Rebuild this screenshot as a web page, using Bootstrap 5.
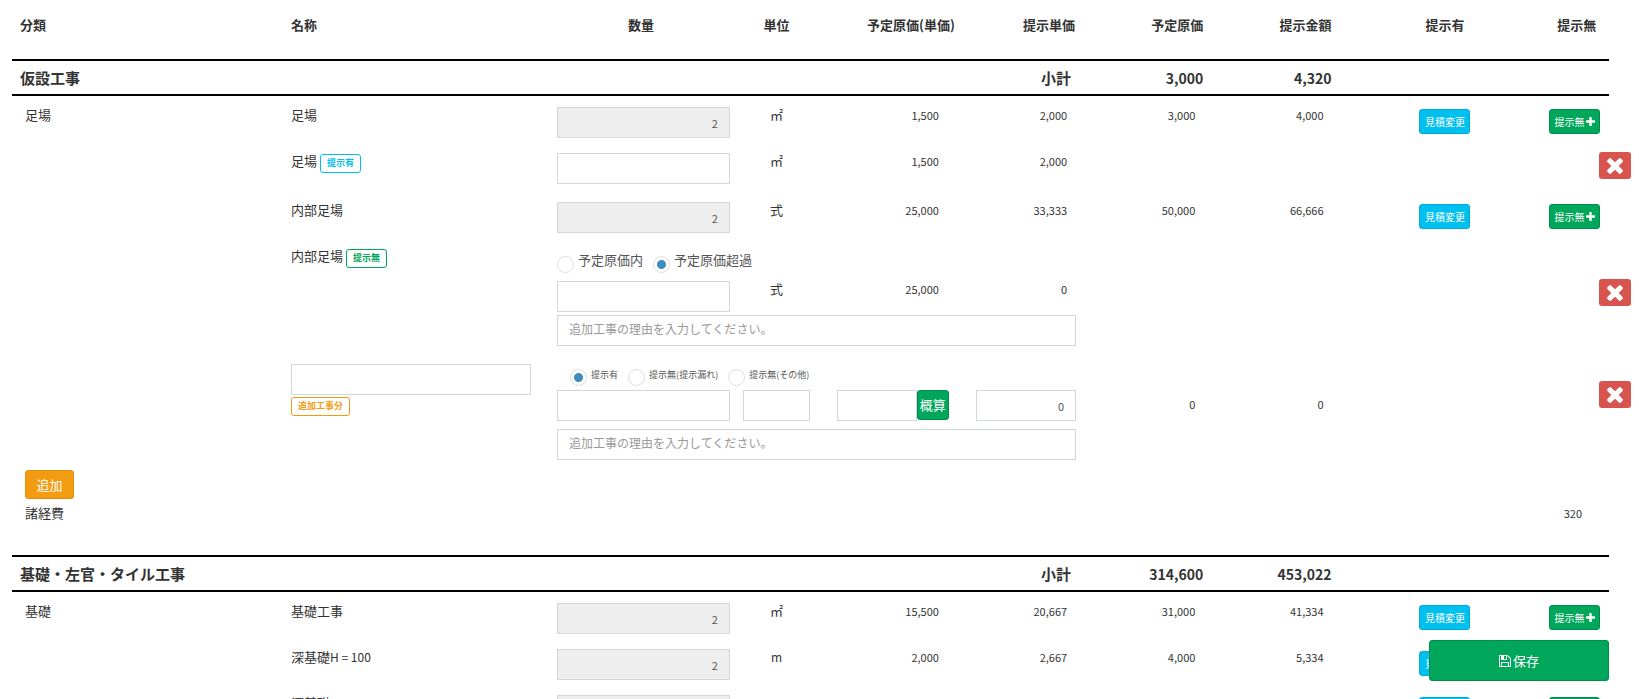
<!DOCTYPE html>
<html lang="ja">
<head>
<meta charset="utf-8">
<meta name="viewport" content="width=device-width, initial-scale=1">
<title>見積明細</title>
<link href="https://cdn.jsdelivr.net/npm/bootstrap@5.3.0/dist/css/bootstrap.min.css" rel="stylesheet">
<style>
body{font-family:"Noto Sans CJK JP","Noto Sans",sans-serif;font-size:13px;line-height:18px;color:#333}
.sheet{padding:0 30px 0 12px}
.estimate{width:100%;table-layout:fixed;border-collapse:separate;border-spacing:0}
.estimate th,.estimate td{padding:10px 13px 0;vertical-align:top;white-space:nowrap}
/* column widths */
.c-cat,.c-name{width:16.66%}.c-qty,.c-with{width:12.45%}.c-unit{width:4.2%}
.c-uprice{width:9.45%}.c-num{width:8.03%}
/* header and section rows */
.estimate thead th{height:59px;padding-top:16px}
.estimate .edge{padding-left:8px}
.estimate th.amt{padding-right:14px;text-align:right}
.estimate th.amt-wide{padding-right:6px;text-align:right}
.estimate th.sum-label{padding-right:18px;text-align:right}
.estimate th.qty-head{padding-right:18px;text-align:center}
.estimate .section-row th{height:37px;padding-top:0;vertical-align:middle;border-top:2px solid #000;border-bottom:2px solid #000;font-size:15px}
.estimate .section-row .figure-sum{font-size:14px}
/* row heights */
.r-item{height:46px}.r-option{height:49px}.r-pick{height:43px}.r-line{height:34px}
.r-reason{height:39px}.r-add-pick{height:36px}.r-add-line{height:39px}.r-last{height:42px}.r-cost{height:51px}
.estimate .flush td{padding-top:0}
.estimate td.unit{padding-left:0;padding-right:0;text-align:center}
.estimate td.num{padding-right:22px;text-align:right;font-size:11px}
.estimate .mid td.num{padding-top:6px}
.estimate td.act{padding-top:13px;text-align:center}
.estimate td.act-end{padding:13px 0 0 5px}
.estimate td.low{padding-top:42px}
.estimate td.mid-low{padding-top:28px}
.estimate td.price-entry{padding-left:27px;padding-right:12px}
.estimate td.amount-entry{padding-left:15px}
.estimate td.cost{padding-right:27px;text-align:right;font-size:11px}
.latin{font-size:12px}
/* controls */
.form-control.field{height:31px;min-height:31px;margin-top:1px;padding:0 11px;border-color:#d2d6de;border-radius:0;font-size:11px;color:#555}
.form-control.field:disabled{background:#eee;opacity:1}
.form-control.reason{font-size:12px;padding-bottom:4px}
.form-control.reason::placeholder{color:#999}
.btn.act-btn{border-radius:3px;color:#fff;padding:0;font-size:13px;line-height:18px}
.btn.mini{width:51px;height:25px;font-size:10px;display:inline-flex;align-items:center;justify-content:center;gap:2px}
.bg-sky{background:#00c0ef;border-color:#00acd6}
.bg-leaf{background:#00a65a;border-color:#008d4c}
.bg-amber{background:#f39c12;border-color:#e08e0b}
.bg-sky:hover{background:#00acd6}.bg-leaf:hover{background:#008d4c}.bg-amber:hover{background:#e08e0b}
.btn.add{width:49px;height:29px}
.btn.rough{width:32px;height:30px;margin-top:1px;flex:none}
.btn.del{width:32px;height:27px;background:#d9534f;border:0;float:right;margin-right:-22px;display:flex;align-items:center;justify-content:center}
.estimate td.del-cell{padding-right:0}
.btn.save{right:30px;bottom:18px;width:180px;height:41px;gap:2px}
.tag-line{display:flex;gap:3px}
.tag-line .tag{margin-top:2px}
.tag{display:inline-block;height:19px;line-height:16px;padding:0 6px;border:1px solid;border-radius:3px;font-size:9px;font-weight:700}
.tag-sky{color:#00c0ef}.tag-leaf{color:#00a65a}.tag-amber{color:#f39c12}
.pick{display:flex;align-items:flex-start;gap:4px;color:#555}
.pick input{appearance:none;width:17px;height:17px;margin:5px 0 0;border:1px solid #ddd;border-radius:50%;background:#fff}
.pick input:checked{background:radial-gradient(circle,#3c8dbc 4px,#fff 5px)}
.picks{padding-top:4px;gap:10px}
.picks-small{padding:5px 0 0 13px;gap:10px}
.picks-small .pick{font-size:9px;line-height:14px}
.picks-small input{margin-top:1px}
svg{fill:currentColor;display:block}
</style>
</head>
<body>
<svg class="d-none" aria-hidden="true">
  <symbol id="i-times" viewBox="302 366 1188 1188"><path d="M1490 1322q0 40-28 68l-136 136q-28 28-68 28t-68-28l-294-294-294 294q-28 28-68 28t-68-28l-136-136q-28-28-28-68t28-68l294-294-294-294q-28-28-28-68t28-68l136-136q28-28 68-28t68 28l294 294 294-294q28-28 68-28t68 28l136 136q28 28 28 68t-28 68l-294 294 294 294q28 28 28 68z"/></symbol>
  <symbol id="i-plus" viewBox="192 128 1408 1408"><path d="M1600 736v192q0 40-28 68t-68 28h-416v416q0 40-28 68t-68 28h-192q-40 0-68-28t-28-68v-416h-416q-40 0-68-28t-28-68v-192q0-40 28-68t68-28h416v-416q0-40 28-68t68-28h192q40 0 68 28t28 68v416h416q40 0 68 28t28 68z"/></symbol>
  <symbol id="i-save" viewBox="128 128 1536 1536"><path d="M512 1536h768v-384h-768v384zm896 0h128v-896q0-14-10-38.5t-20-34.5l-281-281q-10-10-34-20t-39-10v416q0 40-28 68t-68 28h-576q-40 0-68-28t-28-68v-416h-128v1280h128v-416q0-40 28-68t68-28h832q40 0 68 28t28 68v416zm-384-928v-320q0-13-9.5-22.5t-22.5-9.5h-192q-13 0-22.5 9.5t-9.5 22.5v320q0 13 9.5 22.5t22.5 9.5h192q13 0 22.5-9.5t9.5-22.5zm640 32v928q0 40-28 68t-68 28h-1344q-40 0-68-28t-28-68v-1344q0-40 28-68t68-28h928q40 0 88 20t76 48l280 280q28 28 48 76t20 88z"/></symbol>
</svg>
<main class="sheet vh-100 overflow-hidden">
<table class="estimate">
  <colgroup><col class="c-cat"><col class="c-name"><col class="c-qty"><col class="c-unit"><col class="c-uprice"><col class="c-num"><col class="c-num"><col class="c-num"><col class="c-with"><col></colgroup>
  <thead>
    <tr><th class="edge">分類</th><th>名称</th><th class="qty-head">数量</th><th class="text-center px-0">単位</th><th class="amt-wide">予定原価(単価)</th><th class="amt">提示単価</th><th class="amt">予定原価</th><th class="amt">提示金額</th><th class="text-center">提示有</th><th class="text-center px-0">提示無</th></tr>
  </thead>
  <tbody>
    <tr class="section-row"><th class="edge" colspan="5">仮設工事</th><th class="sum-label">小計</th><th class="amt figure-sum">3,000</th><th class="amt figure-sum">4,320</th><th colspan="2"></th></tr>
    <tr class="r-item"><td>足場</td><td>足場</td><td><input class="form-control field text-end" aria-label="足場 数量" value="2" disabled></td><td class="unit">㎡</td><td class="num">1,500</td><td class="num">2,000</td><td class="num">3,000</td><td class="num">4,000</td><td class="act"><button type="button" class="btn act-btn mini bg-sky">見積変更</button></td><td class="act-end"><button type="button" class="btn act-btn mini bg-leaf">提示無<svg width="9" height="9"><use href="#i-plus"/></svg></button></td></tr>
    <tr class="r-option"><td></td><td><div class="tag-line">足場<span class="tag tag-sky">提示有</span></div></td><td><input class="form-control field text-end" aria-label="足場 提示有 数量"></td><td class="unit">㎡</td><td class="num">1,500</td><td class="num">2,000</td><td></td><td></td><td></td><td class="del-cell"><button type="button" class="btn act-btn del" aria-label="削除"><svg width="16" height="16"><use href="#i-times"/></svg></button></td></tr>
    <tr class="r-item"><td></td><td>内部足場</td><td><input class="form-control field text-end" aria-label="内部足場 数量" value="2" disabled></td><td class="unit">式</td><td class="num">25,000</td><td class="num">33,333</td><td class="num">50,000</td><td class="num">66,666</td><td class="act"><button type="button" class="btn act-btn mini bg-sky">見積変更</button></td><td class="act-end"><button type="button" class="btn act-btn mini bg-leaf">提示無<svg width="9" height="9"><use href="#i-plus"/></svg></button></td></tr>
    <tr class="r-pick"><td></td><td rowspan="3"><div class="tag-line">内部足場<span class="tag tag-leaf">提示無</span></div></td>
      <td colspan="7"><div class="d-flex picks"><label class="pick"><input type="radio" name="over">予定原価内</label><label class="pick"><input type="radio" name="over" checked>予定原価超過</label></div></td>
      <td class="del-cell low" rowspan="3"><button type="button" class="btn act-btn del" aria-label="削除"><svg width="16" height="16"><use href="#i-times"/></svg></button></td></tr>
    <tr class="r-line flush"><td></td><td><input class="form-control field text-end" aria-label="内部足場 提示無 数量"></td><td class="unit">式</td><td class="num">25,000</td><td class="num">0</td><td colspan="3"></td></tr>
    <tr class="r-reason flush"><td></td><td colspan="4"><input class="form-control field reason" aria-label="追加工事の理由" placeholder="追加工事の理由を入力してください。"></td><td colspan="3"></td></tr>
    <tr class="r-add-pick"><td></td><td rowspan="3"><input class="form-control field" aria-label="追加工事名"><span class="tag tag-amber">追加工事分</span></td>
      <td colspan="7"><div class="d-flex picks-small"><label class="pick"><input type="radio" name="kind" checked>提示有</label><label class="pick"><input type="radio" name="kind">提示無(提示漏れ)</label><label class="pick"><input type="radio" name="kind">提示無(その他)</label></div></td>
      <td class="del-cell mid-low" rowspan="3"><button type="button" class="btn act-btn del" aria-label="削除"><svg width="16" height="16"><use href="#i-times"/></svg></button></td></tr>
    <tr class="r-add-line flush mid"><td></td><td><input class="form-control field text-end" aria-label="追加工事 数量"></td><td class="unit"><input class="form-control field" aria-label="追加工事 単位"></td><td class="price-entry"><div class="d-flex"><input class="form-control field text-end" aria-label="追加工事 予定原価(単価)"><button type="button" class="btn act-btn rough bg-leaf">概算</button></div></td><td class="amount-entry"><input class="form-control field text-end" aria-label="追加工事 提示単価" value="0"></td><td class="num">0</td><td class="num">0</td><td></td></tr>
    <tr class="r-last flush"><td></td><td colspan="4"><input class="form-control field reason" aria-label="追加工事の理由" placeholder="追加工事の理由を入力してください。"></td><td colspan="3"></td></tr>
    <tr class="r-line flush"><td colspan="10"><button type="button" class="btn act-btn add bg-amber">追加</button></td></tr>
    <tr class="r-cost flush"><td colspan="9">諸経費</td><td class="cost">320</td></tr>
  </tbody>
  <tbody>
    <tr class="section-row"><th class="edge" colspan="5">基礎・左官・タイル工事</th><th class="sum-label">小計</th><th class="amt figure-sum">314,600</th><th class="amt figure-sum">453,022</th><th colspan="2"></th></tr>
    <tr class="r-item"><td>基礎</td><td>基礎工事</td><td><input class="form-control field text-end" aria-label="基礎工事 数量" value="2" disabled></td><td class="unit">㎡</td><td class="num">15,500</td><td class="num">20,667</td><td class="num">31,000</td><td class="num">41,334</td><td class="act"><button type="button" class="btn act-btn mini bg-sky">見積変更</button></td><td class="act-end"><button type="button" class="btn act-btn mini bg-leaf">提示無<svg width="9" height="9"><use href="#i-plus"/></svg></button></td></tr>
    <tr class="r-item"><td></td><td>深基礎<span class="latin">H = 100</span></td><td><input class="form-control field text-end" aria-label="深基礎H = 100 数量" value="2" disabled></td><td class="unit"><span class="latin">m</span></td><td class="num">2,000</td><td class="num">2,667</td><td class="num">4,000</td><td class="num">5,334</td><td class="act"><button type="button" class="btn act-btn mini bg-sky">見積変更</button></td><td class="act-end"><button type="button" class="btn act-btn mini bg-leaf">提示無<svg width="9" height="9"><use href="#i-plus"/></svg></button></td></tr>
    <tr class="r-item"><td></td><td>深基礎<span class="latin">H</span></td><td><input class="form-control field text-end" aria-label="深基礎H 数量" disabled></td><td colspan="5"></td><td class="act"><button type="button" class="btn act-btn mini bg-sky" aria-label="見積変更"></button></td><td class="act-end"><button type="button" class="btn act-btn mini bg-leaf" aria-label="提示無"></button></td></tr>
  </tbody>
</table>
</main>
<button type="button" class="btn act-btn save bg-leaf position-fixed d-flex align-items-center justify-content-center"><svg width="12" height="12"><use href="#i-save"/></svg>保存</button>
<script src="https://cdn.jsdelivr.net/npm/bootstrap@5.3.0/dist/js/bootstrap.bundle.min.js"></script>
</body>
</html>
